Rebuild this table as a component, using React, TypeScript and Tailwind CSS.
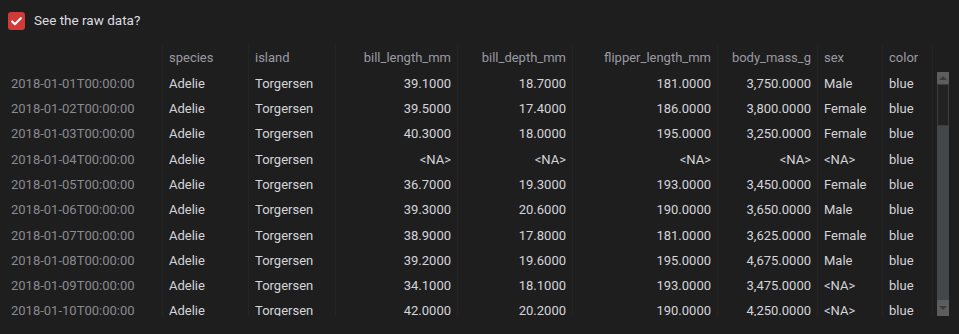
import { Check } from "lucide-react";

const cols = [
  { key: "species", w: "w-[86px]", right: false },
  { key: "island", w: "w-[87px]", right: false },
  { key: "bill_length_mm", w: "w-[122px]", right: true },
  { key: "bill_depth_mm", w: "w-[115px]", right: true },
  { key: "flipper_length_mm", w: "w-[145px]", right: true },
  { key: "body_mass_g", w: "w-[100px]", right: true },
  { key: "sex", w: "w-[65px]", right: false },
  { key: "color", w: "w-[50px]", right: false },
];

const rows = [
  ["Adelie", "Torgersen", "39.1000", "18.7000", "181.0000", "3,750.0000", "Male", "blue"],
  ["Adelie", "Torgersen", "39.5000", "17.4000", "186.0000", "3,800.0000", "Female", "blue"],
  ["Adelie", "Torgersen", "40.3000", "18.0000", "195.0000", "3,250.0000", "Female", "blue"],
  ["Adelie", "Torgersen", "<NA>", "<NA>", "<NA>", "<NA>", "<NA>", "blue"],
  ["Adelie", "Torgersen", "36.7000", "19.3000", "193.0000", "3,450.0000", "Female", "blue"],
  ["Adelie", "Torgersen", "39.3000", "20.6000", "190.0000", "3,650.0000", "Male", "blue"],
  ["Adelie", "Torgersen", "38.9000", "17.8000", "181.0000", "3,625.0000", "Female", "blue"],
  ["Adelie", "Torgersen", "39.2000", "19.6000", "195.0000", "4,675.0000", "Male", "blue"],
  ["Adelie", "Torgersen", "34.1000", "18.1000", "193.0000", "3,475.0000", "<NA>", "blue"],
  ["Adelie", "Torgersen", "42.0000", "20.2000", "190.0000", "4,250.0000", "<NA>", "blue"],
];

// vertical rules only, very faint
const cell = "h-[25.33px] flex items-center px-[6px] border-r border-[#242424] shrink-0 whitespace-nowrap";

const App = () => (
  <div className="w-[959px] h-[334px] bg-[#1e1e1e] overflow-hidden font-['Roboto',sans-serif] text-[13px]">
    <label className="flex items-center gap-[9px] pl-[8px] pt-[12px] h-[30px]">
      <span className="w-[17px] h-[18px] rounded-[3px] bg-[#d13a36] flex items-center justify-center">
        <Check className="w-[13px] h-[13px] text-white" strokeWidth={4} />
      </span>
      <span className="text-[#dcdce0] text-[13.5px] -mt-[2px]">See the raw data?</span>
    </label>

    <div className="ml-[5px] mt-[15.3px] w-[945px]">
      {/* header */}
      <div className="flex text-[#9a9aa2]">
        <div className={`${cell} w-[158px]`} />
        {cols.map((c) => (
          <div key={c.key} className={`${cell} ${c.w} ${c.right ? "justify-end" : ""}`}>
            {c.key}
          </div>
        ))}
      </div>

      {/* body */}
      <div className="flex h-[245px] overflow-hidden">
        <div className="w-[928px]">
          {rows.map((r, i) => (
            <div key={i} className="flex">
              <div className={`${cell} w-[158px] text-[#8a8a90]`}>
                {`2018-01-${String(i + 1).padStart(2, "0")}T00:00:00`}
              </div>
              {cols.map((c, j) => (
                <div
                  key={c.key}
                  className={`${cell} ${c.w} text-[#d4d4da] ${c.right ? "justify-end" : ""}`}
                >
                  {r[j]}
                </div>
              ))}
            </div>
          ))}
        </div>
        {/* scrollbar */}
        <div className="ml-[4px] w-[12px] h-[244px] mt-[1px] flex flex-col bg-[#43474a]">
          <div className="h-[12px] bg-[#5d5d5d] flex items-center justify-center">
            <span className="w-0 h-0 border-x-[4px] border-x-transparent border-b-[4px] border-b-[#3a3a3a]" />
          </div>
          <div className="h-[42px] bg-[#232323] border border-[#3a3e40]" />
          <div className="flex-1" />
          <div className="h-[16px] bg-[#5d5d5d] flex items-center justify-center">
            <span className="w-0 h-0 border-x-[4px] border-x-transparent border-t-[4px] border-t-[#3a3a3a]" />
          </div>
        </div>
      </div>
    </div>
  </div>
);

export default App;
